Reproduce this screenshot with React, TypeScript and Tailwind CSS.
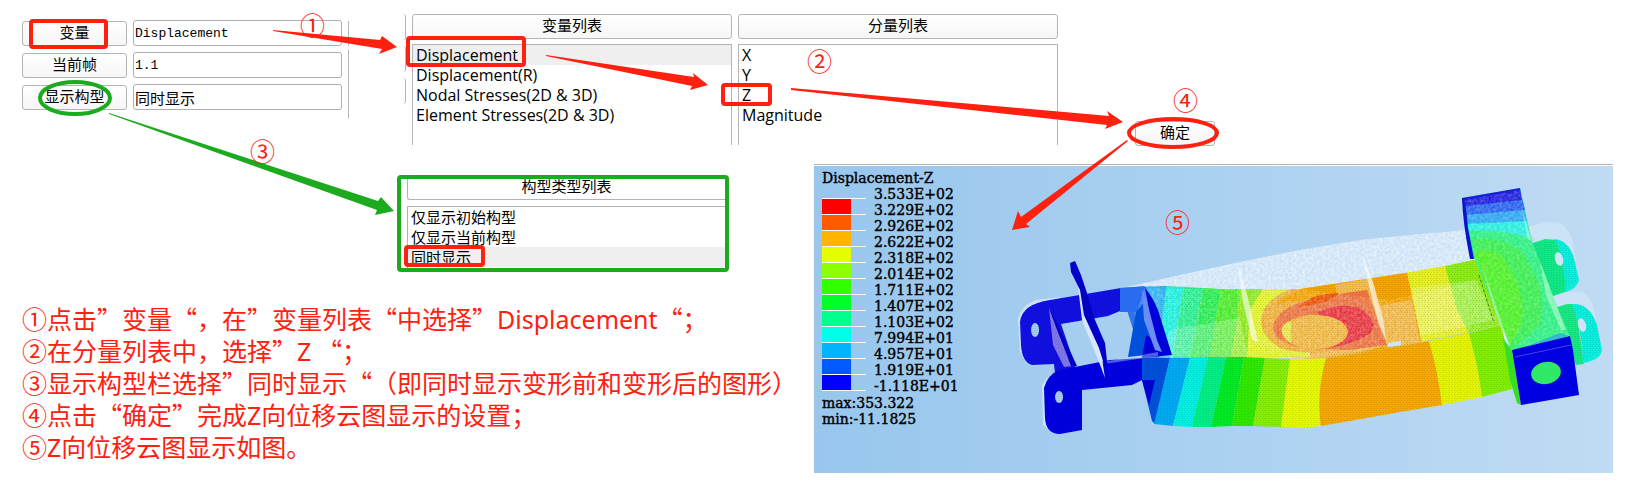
import React from "react";

const SONG = "font-['Liberation_Mono','Noto_Sans_CJK_SC',monospace]";
const YAHEI = "font-['Noto_Sans','Noto_Sans_CJK_SC',sans-serif]";
const RED = "#ff2010";
const GREEN = "#1cab1f";

const fields = [
  { label: "变量", value: "Displacement", size: "text-[13px]" },
  { label: "当前帧", value: "1.1", size: "text-[13px]" },
  { label: "显示构型", value: "同时显示", size: "text-[15px]" },
];

const legend = [
  { value: "3.533E+02", color: "bg-[#ff0000]" },
  { value: "3.229E+02", color: "bg-[#ff5a00]" },
  { value: "2.926E+02", color: "bg-[#ffb400]" },
  { value: "2.622E+02", color: "bg-[#e6ff00]" },
  { value: "2.318E+02", color: "bg-[#8cff00]" },
  { value: "2.014E+02", color: "bg-[#32ff00]" },
  { value: "1.711E+02", color: "bg-[#00ff28]" },
  { value: "1.407E+02", color: "bg-[#00ff8c]" },
  { value: "1.103E+02", color: "bg-[#00ffe6]" },
  { value: "7.994E+01", color: "bg-[#00b4ff]" },
  { value: "4.957E+01", color: "bg-[#005aff]" },
  { value: "1.919E+01", color: "bg-[#0000ff]" },
  { value: "-1.118E+01", color: "" },
];

function PushButton({ children, className = "" }: { children: React.ReactNode; className?: string }) {
  return (
    <button
      type="button"
      className={`h-[25px] rounded-[3px] border border-[#b4b4b4] bg-linear-to-b from-white to-[#f6f6f6] pt-[2px] text-center text-[15px] leading-[21px] text-black ${SONG} ${className}`}
    >
      {children}
    </button>
  );
}

function ListItems({
  items,
  selected,
  font = `text-[15px] ${YAHEI}`,
}: {
  items: string[];
  selected?: string;
  font?: string;
}) {
  return (
    <ul>
      {items.map((item) => (
        <li key={item}>
          <button
            type="button"
            className={`block h-5 w-full pl-[3px] text-left leading-5 text-black ${font} ${item === selected ? "bg-[#efefef]" : ""}`}
          >
            {item}
          </button>
        </li>
      ))}
    </ul>
  );
}

function ListColumn({ title, items, selected }: { title: string; items: string[]; selected?: string }) {
  return (
    <div className="flex w-80 flex-col gap-[5px]">
      <PushButton>{title}</PushButton>
      <div className="border border-b-0 border-[#b4b4b4] pb-5">
        <ListItems items={items} selected={selected} font="text-[16px] font-['Open_Sans',sans-serif]" />
      </div>
    </div>
  );
}

function Model() {
  return (
    <svg viewBox="1000 166 613 307" className="h-[307px] w-[613px] shrink-0" aria-label="Displacement-Z">
      <defs>
        <pattern id="mesh" width="3" height="4" patternUnits="userSpaceOnUse">
          <path d="M0 0h1v1h-1zM2 2h1v1h-1z" fill="#000" opacity="0.13" />
        </pattern>
        <filter id="grain" x="0" y="0" width="100%" height="100%">
          <feTurbulence type="fractalNoise" baseFrequency="0.35" numOctaves="2" seed="4" />
          <feColorMatrix values="0 0 0 0 1  0 0 0 0 1  0 0 0 0 1  1.8 0 0 0 -0.5" />
          <feComposite in2="SourceGraphic" operator="in" />
        </filter>
        <clipPath id="top">
          <path d="M1120 288L1165 286L1220 289L1300 289L1320 286L1372 278L1405 273L1445 266L1478 259L1512 350L1500 325L1470 332L1420 342L1350 355L1310 359L1290 358L1142 358Z" />
        </clipPath>
      </defs>

      <g fill="#cbe2f7">
        <path d="M1122 288L1180 275L1240 262L1300 250L1360 240L1420 234L1466 230L1478 262L1400 276L1300 290Z" />
        <path d="M1528 228Q1545 220 1560 223Q1572 230 1574 250L1576 262L1540 250Z" />
        <path d="M1551 297Q1570 289 1584 293Q1594 300 1597 325L1560 312Z" />
        <path d="M1018 320Q1020 306 1036 300L1060 297V303L1025 312L1022 345L1028 366L1020 352Z" />
        <path d="M1042 385L1047 378L1046 420L1054 434L1043 425Z" />
      </g>
      <path fill="#fff" opacity="0.6" filter="url(#grain)" d="M1122 288L1180 275L1240 262L1300 250L1360 240L1420 234L1466 230L1478 262L1400 276L1300 290Z" />

      <g clipPath="url(#top)">
        <path fill="#f2e62a" d="M1120 250H1520V370H1120Z" />
        <path fill="#2f74ee" d="M1115 280H1150L1170 360H1115Z" />
        <path fill="#2fb4f2" d="M1145 280H1168L1162 325L1170 360H1160Z" />
        <path fill="#1df2e2" d="M1167 280H1185L1172 360H1170L1162 325Z" />
        <path fill="#25f090" d="M1185 280H1205L1190 360H1172Z" />
        <path fill="#25ee50" d="M1205 280H1222L1210 360H1190Z" />
        <path fill="#4bee28" d="M1222 280H1240L1238 315L1231 360H1210Z" />
        <path fill="#8bec18" d="M1240 280H1272L1250 310L1247 360H1231L1238 315Z" />
        <path fill="#e2f424" d="M1268 280H1310L1290 360H1247L1250 310Z" />
        <ellipse cx="1322" cy="321" rx="61" ry="37" fill="#f1b03a" />
        <path fill="#f4a400" d="M1276 304Q1292 287 1330 284L1372 277L1407 272L1415 310L1422 343L1350 356L1340 345L1370 290Z" />
        <path fill="#f3bc50" d="M1335 285L1372 278L1386 345L1350 356L1310 359L1290 356L1350 349Z" />
        <path fill="#f3b845" d="M1378 306L1412 300L1420 343L1387 348Z" />
        <path fill="#ee7440" d="M1273 328Q1276 307 1310 300L1345 293L1367 290L1387 345L1350 350L1322 349Q1275 348 1273 328Z" />
        <path fill="#ef5000" d="M1299 307Q1312 293 1339 293Q1334 302 1299 307Z" />
        <path fill="#ea3540" d="M1318 312Q1340 302 1360 308Q1376 318 1373 330Q1362 342 1334 347Z" />
        <ellipse cx="1315" cy="332" rx="33" ry="17" fill="#f2b840" />
        <path fill="#e8e84a" d="M1291 321V343Q1280 335 1282 328Q1284 323 1291 321Z" />
        <path fill="none" stroke="#e4f03a" strokeWidth="5" d="M1252 333Q1266 354 1310 355" />
        <path fill="#e4ee22" d="M1407 272L1445 266L1457 310L1470 335L1422 343L1415 310Z" />
        <path fill="#8cec18" d="M1445 266L1480 258L1515 350L1500 325L1470 335L1457 310Z" />
        <path fill="#fff" opacity="0.22" d="M1412 288L1475 280L1495 320L1420 336ZM1170 330L1240 318L1248 357H1160Z" />
        <path fill="url(#mesh)" d="M1160 250H1520V370H1160Z" />
      </g>
      <path fill="#fff" opacity="0.3" filter="url(#grain)" d="M1130 288L1220 289L1300 289L1390 300L1480 280L1500 325L1420 342L1310 359L1142 358Z" />
      <path fill="#fff" opacity="0.6" d="M1238 264L1248 298L1258 342L1252 340L1242 298ZM1362 254L1374 285L1383 318L1386 340L1379 325L1368 282Z" />

      <path fill="#0050dc" d="M1142 358H1170L1155 424L1152 421L1142 380Z" />
      <path fill="#00aaf2" d="M1170 358H1190L1173 426L1154 424Z" />
      <path fill="#00efe0" d="M1190 358L1208 357L1192 427L1173 426Z" />
      <path fill="#00ee86" d="M1208 357H1226L1211 427H1192Z" />
      <path fill="#00ea26" d="M1226 357H1244L1232 426L1211 427Z" />
      <path fill="#30e800" d="M1244 357L1265 358L1253 426H1232Z" />
      <path fill="#86ee00" d="M1265 358L1290 359L1281 427L1253 426Z" />
      <path fill="#e4f800" d="M1290 359H1310L1326 358Q1316 395 1321 426L1300 428L1281 427Z" />
      <path fill="#f5a800" d="M1326 358L1350 355L1429 341Q1438 370 1442 405L1400 412L1350 421L1321 426Q1316 395 1326 358Z" />
      <path fill="#e4f400" d="M1429 341L1469 333Q1478 365 1482 397L1442 405Q1438 370 1429 341Z" />
      <path fill="#82ee00" d="M1469 333L1502 325L1512 389L1482 397Q1478 365 1469 333Z" />
      <path fill="url(#mesh)" d="M1142 358L1310 359L1420 342L1502 325L1512 389L1442 405L1350 421L1300 428L1155 424Z" />
      <path fill="#d0e6fa" d="M1388 343L1401 341V345L1388 347Z" />

      <path fill="#10e887" d="M1530 244L1545 239L1558 240L1568 291L1553 296Z" />
      <path fill="#0ceedc" d="M1555 239Q1569 241 1574 258L1579 280Q1577 289 1565 292Q1566 265 1555 239Z" />
      <path fill="#18e884" d="M1554 308L1567 304H1575L1584 364L1576 365Z" />
      <path fill="#0ceedc" d="M1572 304Q1590 303 1597 325L1602 350Q1601 360 1583 363Q1582 330 1572 304Z" />
      <path fill="url(#mesh)" d="M1530 244L1558 240Q1575 245 1578 282L1553 296ZM1554 308L1580 304Q1597 310 1602 350L1577 365Z" />
      <ellipse cx="1559" cy="259" rx="4" ry="7" fill="#cfe4f6" transform="rotate(-15 1559 259)" />
      <ellipse cx="1582" cy="325" rx="4" ry="7" fill="#cfe4f6" transform="rotate(-15 1582 325)" />

      <path fill="#2bee80" d="M1462 198L1520 188L1532 242L1546 275L1553 297L1572 340L1512 352L1500 322L1475 259L1472 259Z" />
      <path fill="#38ec50" d="M1472 240Q1500 236 1520 250Q1550 290 1540 325L1511 350L1482 270Z" />
      <path fill="#4cee26" d="M1474 252Q1490 246 1503 258Q1528 295 1521 325L1510 345Z" />
      <path fill="#28ecdf" d="M1465 224L1527 220L1530 238Q1495 228 1470 231Z" />
      <path fill="#2ba6f0" d="M1465 214L1524 208L1527 221L1467 224Z" />
      <path fill="#2762ee" d="M1463 204L1522 198L1525 210L1466 215Z" />
      <path fill="#1c1cdc" d="M1462 198L1520 188L1522 200L1464 206Z" />
      <path fill="#0a14cc" d="M1462 198L1465 198L1468 228L1474 259L1470 259Q1463 225 1462 198Z" />
      <path fill="#fff" opacity="0.28" filter="url(#grain)" d="M1464 200L1520 190L1532 242L1570 338L1512 350L1475 259Z" />
      <path fill="#fff" opacity="0.4" d="M1521 205L1531 240H1528ZM1540 262L1554 300L1566 330L1561 330L1546 295ZM1481 262L1500 318L1510 345L1506 343L1493 305Z" />
      <path fill="#35df25" d="M1503 338L1512 351L1521 405L1517 403L1510 380Z" />
      <path fill="#0000e6" d="M1512 350L1570 336L1573 350L1579 395L1521 405Z" />
      <path fill="#30a0ee" d="M1525 347L1560 333L1569 336L1540 343Z" opacity="0.7" />
      <path fill="none" stroke="#4a42f0" d="M1515 357L1571 345" />
      <path fill="url(#mesh)" d="M1512 350L1570 336L1579 395L1521 405Z" />
      <ellipse cx="1546" cy="373" rx="15" ry="11" fill="#2eea66" transform="rotate(-12 1546 373)" />
      <path d="M1479 275L1494 323" stroke="#3b8a10" strokeDasharray="3 2" />

      <path fill="#1010e2" fillRule="evenodd" d="M1020 322Q1022 304 1050 300L1121 288L1120 311L1108 316L1061 324L1076 368L1055 373L1054 364L1032 365Q1022 362 1021 345ZM1035 323a4 7 0 1 0 .1 0Z" />
      <path fill="#2a6cf0" d="M1120 288L1145 286L1137 312H1120Z" />
      <path fill="#0050dc" d="M1136 312L1146 300L1160 330L1170 353L1128 357Z" />
      <path fill="#0000d8" d="M1145 288Q1152 296 1158 310L1172 355L1142 358L1146 335L1155 340Z" />
      <path fill="#6a8cf4" d="M1142 290L1146 298L1157 340L1162 352L1155 350L1144 320Z" />
      <path fill="#0000e0" fillRule="evenodd" d="M1044 388Q1048 374 1060 370L1110 360L1142 358V380L1132 385L1082 390V430L1060 434Q1046 434 1045 418ZM1059 391a4 6 0 1 0 .1 0Z" />
      <path fill="#0000d0" d="M1142 380L1155 380L1149 405Z" />
      <path fill="#c9e0f8" d="M1103 362L1158 352V356L1104 364Z" opacity="0.4" />
      <path fill="#8076e8" d="M1049 308L1057 330L1072 366L1064 367L1053 345Z" />
      <path fill="#0000cc" d="M1050 310L1057 323L1077 366L1071 366Z" />
      <path fill="#d8e8fa" d="M1077 278L1086 310L1101 352L1105 378L1099 362L1082 320Z" />
      <path fill="#0000c8" d="M1070 263L1075 261L1081 275L1087 293L1095 320L1105 343L1108 370L1104 364L1099 348L1084 315L1080 290L1071 272Z" />
      <path fill="url(#mesh)" d="M1022 310L1120 288V311L1061 324L1076 368L1142 358V380L1082 390V430L1050 432L1044 390L1054 364L1028 363Z" />
    </svg>
  );
}

function Annotations() {
  const mark = `absolute text-[25px] leading-none text-[#ff2010] font-['Noto_Sans_CJK_SC',sans-serif]`;
  return (
    <div className="pointer-events-none absolute inset-0 overflow-hidden">
      <svg width="1633" height="495" className="absolute top-0 left-0" aria-hidden="true">
        <g fill={RED}>
          <path d="M273 30L380 40L382 36L397 47L379 54L382 49L273 31Z" />
          <path d="M546 55L694 77L693 73L708 85L690 90L692 86L546 56Z" />
          <path d="M791 88L1109 116L1107 111L1123 122L1105 129L1107 125L791 90Z" />
          <path d="M1128 141L1026 224L1030 227L1012 230L1018 211L1021 217L1127 140Z" />
        </g>
        <path fill={GREEN} d="M109 113L378 201L381 197L394 211L375 215L377 210L109 114Z" />
        <g fill="none" stroke={RED} strokeWidth="4">
          <rect x="31" y="21" width="75" height="26" rx="2" />
          <rect x="408" y="38" width="116" height="27" rx="2" />
          <rect x="723" y="85" width="47" height="19" rx="2" />
          <rect x="406" y="247" width="77" height="18" rx="2" />
          <ellipse cx="1173" cy="133" rx="44" ry="14" />
        </g>
        <ellipse cx="75" cy="98" rx="35" ry="16" fill="none" stroke={GREEN} strokeWidth="4" />
      </svg>
      <span className={`${mark} top-3 left-[300px]`}>①</span>
      <span className={`${mark} top-12 left-[807px]`}>②</span>
      <span className={`${mark} top-[138px] left-[250px]`}>③</span>
      <span className={`${mark} top-[87px] left-[1173px]`}>④</span>
      <span className={`${mark} top-[209px] left-[1165px]`}>⑤</span>
    </div>
  );
}

export default function App() {
  return (
    <main className="relative flex min-h-screen min-w-[1240px] flex-col bg-white" lang="zh-CN">
      <section className="flex items-start">
        <form className="ml-[22px] flex flex-col gap-[6px] pt-5">
          {fields.map((f) => (
            <div key={f.label} className="flex items-center gap-[6px]">
              <PushButton className="w-[105px]">{f.label}</PushButton>
              <input
                aria-label={f.label}
                defaultValue={f.value}
                className={`h-[26px] w-[209px] rounded-[3px] border border-[#aeaeae] bg-white px-px pt-px text-black ${SONG} ${f.size}`}
              />
            </div>
          ))}
        </form>
        <div className="ml-[6px] flex w-[58px] justify-between" aria-hidden="true">
          <div className="flex flex-col gap-1 pt-[21px]">
            <div className="h-[25px] w-px bg-[#b4b4b4]" />
            <div className="h-[68px] w-px bg-[#b4b4b4]" />
          </div>
          <div className="flex flex-col gap-[6px] pt-[14px]">
            <div className="h-[26px] w-[3px] rounded-r-[3px] border-r border-[#b4b4b4]" />
            <div className="h-[26px] w-[3px] rounded-r-[3px] border-r border-[#b4b4b4]" />
            <div className="h-[26px] w-[3px] rounded-r-[3px] border-r border-[#b4b4b4]" />
          </div>
        </div>
        <div className="ml-[6px] flex gap-[6px] pt-[14px]">
          <ListColumn
            title="变量列表"
            items={["Displacement", "Displacement(R)", "Nodal Stresses(2D & 3D)", "Element Stresses(2D & 3D)"]}
            selected="Displacement"
          />
          <ListColumn title="分量列表" items={["X", "Y", "Z", "Magnitude"]} />
        </div>
        <PushButton className="mt-[121px] ml-[77px] w-20">确定</PushButton>
      </section>

      <section className="mt-[18px] flex items-start">
        <div className="flex w-[814px] shrink-0 flex-col gap-[30px] pt-[11px]">
          <div className="ml-[397px] flex w-[332px] flex-col rounded-[4px] border-4 border-[#1cab1f] pl-[6px]">
            <button
              type="button"
              className={`h-[21px] rounded-bl-[3px] border-b border-l border-[#b4b4b4] bg-white text-center text-[15px] leading-5 text-black ${SONG}`}
            >
              构型类型列表
            </button>
            <div className="mt-[6px] border-t border-l border-[#b4b4b4] pb-px">
              <ListItems items={["仅显示初始构型", "仅显示当前构型", "同时显示"]} selected="同时显示" />
            </div>
          </div>
          <ol className="pl-[22px] text-[25px] leading-8 whitespace-nowrap text-[#ff2010] font-['Noto_Sans_CJK_SC',sans-serif] [text-spacing-trim:space-all]">
            <li className="h-8">①点击”变量“，在”变量列表“中选择”<span className={`${YAHEI} leading-none`}>Displacement</span>“；</li>
            <li className="h-8">②在分量列表中，选择”<span className={`${YAHEI} leading-none`}>Z</span> “；</li>
            <li className="h-8">③显示构型栏选择”同时显示“（即同时显示变形前和变形后的图形）</li>
            <li className="h-8">④点击“确定”完成<span className={`${YAHEI} leading-none`}>Z</span>向位移云图显示的设置；</li>
            <li className="h-8">⑤<span className={`${YAHEI} leading-none`}>Z</span>向位移云图显示如图。</li>
          </ol>
        </div>
        <div className="mr-5 flex-1 border-t border-[#b4b4b4] pt-px">
          <div className="flex justify-between overflow-hidden bg-linear-to-r from-[#98c6ed] via-[#abd1f1] to-[#c0dbf3]">
            <div className="shrink-0 pt-1 pl-2 text-[14px] leading-4 text-black font-['DejaVu_Serif',serif] [-webkit-text-stroke:0.4px_#000]">
              <h2>Displacement-Z</h2>
              <div className="flex gap-2">
                <div className="pt-3">
                  {legend.map((l) => (
                    <div key={l.value} className="h-4 w-11 border-t border-white last:h-px">
                      {l.color && <div className={`h-[15px] w-[29px] ${l.color}`} />}
                    </div>
                  ))}
                </div>
                <ul>
                  {legend.map((l) => (
                    <li key={l.value}>{l.value}</li>
                  ))}
                </ul>
              </div>
              <p className="pt-px">max:353.322</p>
              <p>min:-11.1825</p>
            </div>
            <Model />
          </div>
        </div>
      </section>
      <Annotations />
    </main>
  );
}
